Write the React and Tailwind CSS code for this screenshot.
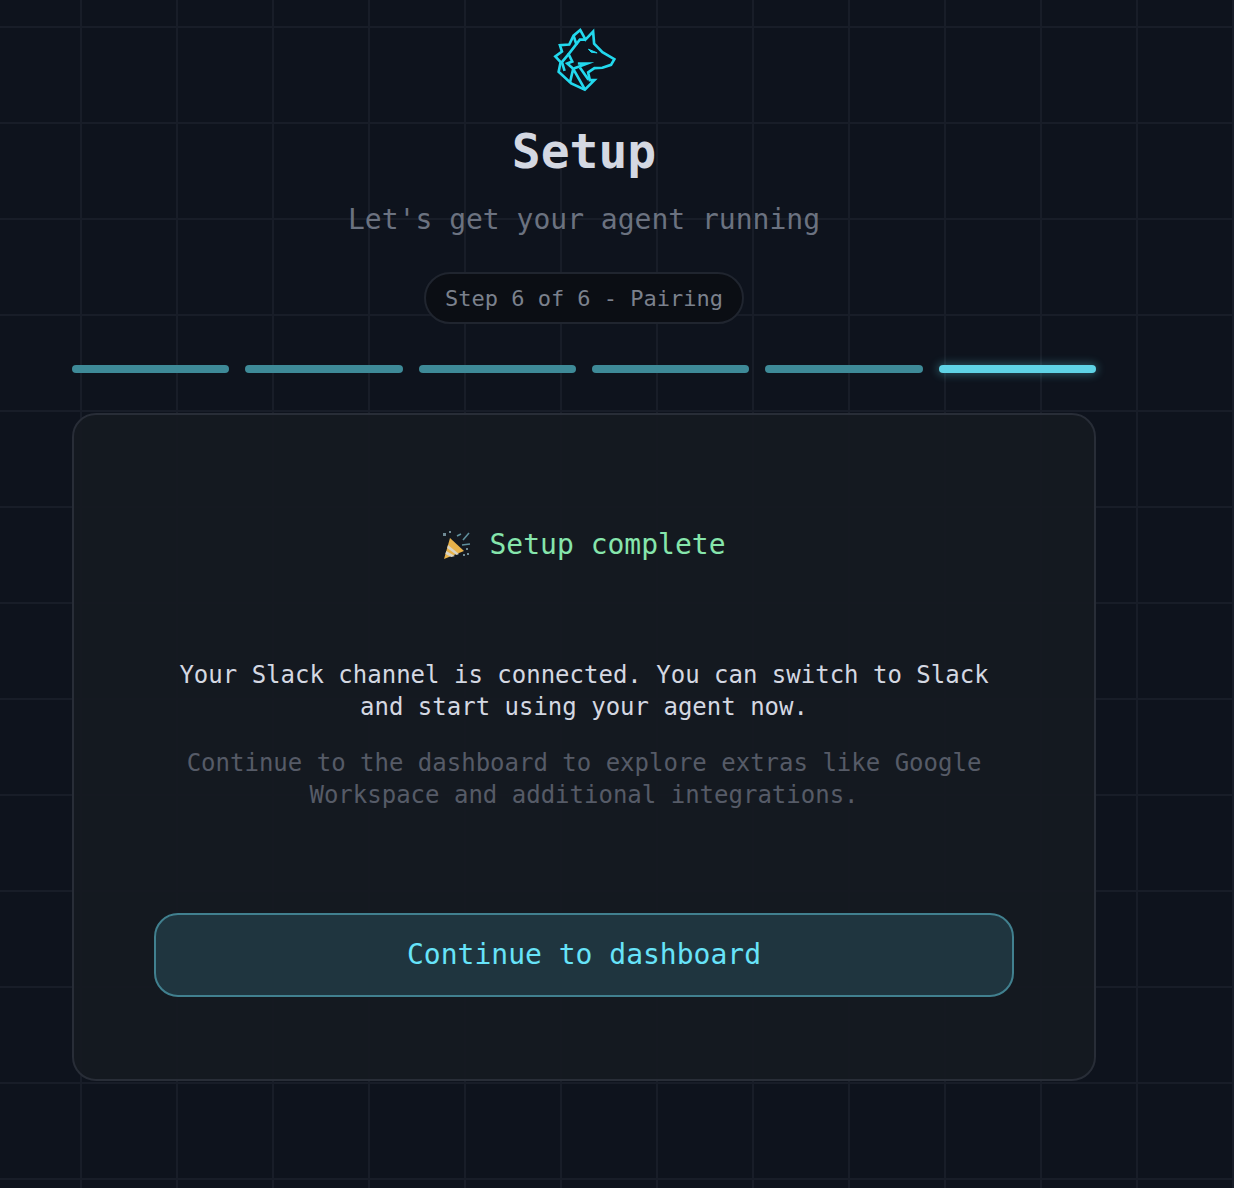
const FONT = "font-['DejaVu_Sans_Mono','Liberation_Mono',monospace]";

function WolfLogo() {
  return (
    <svg viewBox="60 40 200 205" className="w-[67px] h-[68px]" fill="none" stroke="#22d9ee" strokeWidth="8" strokeLinejoin="miter" strokeMiterlimit="6">
      <path d="M147 55 L163 84 L186 60 L189 96 L214 122 L250 143 L240 160 L214 169 L190 170 L171 183 L176 206 L190 206 L161 235 L120 216 L82 181 L88 152 L72 135 L92 120 L86 101 L114 99 L127 72 Z" />
      <path d="M163 84 L146 84 L112 128 L123 150 L108 156 L126 172 L168 156 L140 156" />
      <path d="M127 72 L136 100 M126 172 L116 214 M126 172 L160 232 M146 168 L172 205 M112 128 L92 152 L100 178" />
      <path d="M172 113 L198 124 L180 122 Z" fill="#22d9ee" strokeWidth="3" />
    </svg>
  );
}

function PartyPopper() {
  return (
    <svg viewBox="0 0 30 30" className="w-[30px] h-[30px]">
      <path d="M2 29 L8 8 L22 21 Z" fill="#e8b24a" />
      <path d="M4.2 21 L13 26 L9.4 27 L3.4 24 Z M6 15 L17 24 L14.6 25 L5.2 18 Z" fill="#d9d4c4" />
      <path d="M15 6 L19 4 M21 10 L27 3 M20 15 L28 14" stroke="#5f8f9c" strokeWidth="1.6" fill="none" />
      <path d="M1 3 h3 v3 h-3z M7 1 h2 v2 h-2z M24 18 h2 v2 h-2z M25 23 h2 v2 h-2z M21 24 h2 v2 h-2z" fill="#6f8a94" />
    </svg>
  );
}

export default function App() {
  return (
    <div className={`${FONT} relative w-[1234px] h-[1188px] overflow-hidden bg-[#0e131d] bg-[linear-gradient(#181d28_2px,transparent_2px),linear-gradient(90deg,#181d28_2px,transparent_2px)] bg-[length:96px_96px] bg-[position:80px_26px]`}>
      <div className="ml-[72px] w-[1024px] flex flex-col items-center pt-[25px]">
        <WolfLogo />
        <h1 className="mt-[28px] text-[48px] leading-[60px] font-bold text-[#d4d8e2]">Setup</h1>
        <p className="mt-[21px] text-[28px] leading-[36px] text-[#6b7280]">Let's get your agent running</p>
        <div className="mt-[34px] w-[320px] h-[52px] flex items-center justify-center rounded-full border-2 border-[#20252f] bg-[#0b0e14] text-[22px] text-[#7b818d]">
          Step 6 of 6 - Pairing
        </div>

        <div className="mt-[41px] w-full grid grid-cols-6 gap-4">
          {[0, 1, 2, 3, 4].map((i) => (
            <div key={i} className="h-2 rounded-full bg-[#3e8a98]" />
          ))}
          <div className="h-2 rounded-full bg-[#5fd3e6] shadow-[0_0_8px_2px_rgba(95,211,230,0.3)]" />
        </div>

        <div className="mt-[40px] w-full h-[668px] rounded-[24px] border-2 border-[#282d37] bg-[#151921]/95 px-[80px] flex flex-col items-center">
          <div className="mt-[112px] flex items-center gap-[17px] text-[28px] leading-[36px] text-[#86e5ac]">
            <PartyPopper />
            <span>Setup complete</span>
          </div>
          <p className="mt-[96px] text-center text-[24px] leading-[32px] text-[#d4d8e2]">
            Your Slack channel is connected. You can switch to Slack<br />and start using your agent now.
          </p>
          <p className="mt-[24px] text-center text-[24px] leading-[32px] text-[#565b67]">
            Continue to the dashboard to explore extras like Google<br />Workspace and additional integrations.
          </p>
          <button className="mt-[102px] w-[860px] h-[84px] shrink-0 rounded-[24px] border-2 border-[#41808f] bg-[#1f353f] text-[28px] font-medium text-[#67e3f9]">
            Continue to dashboard
          </button>
        </div>
      </div>
    </div>
  );
}
